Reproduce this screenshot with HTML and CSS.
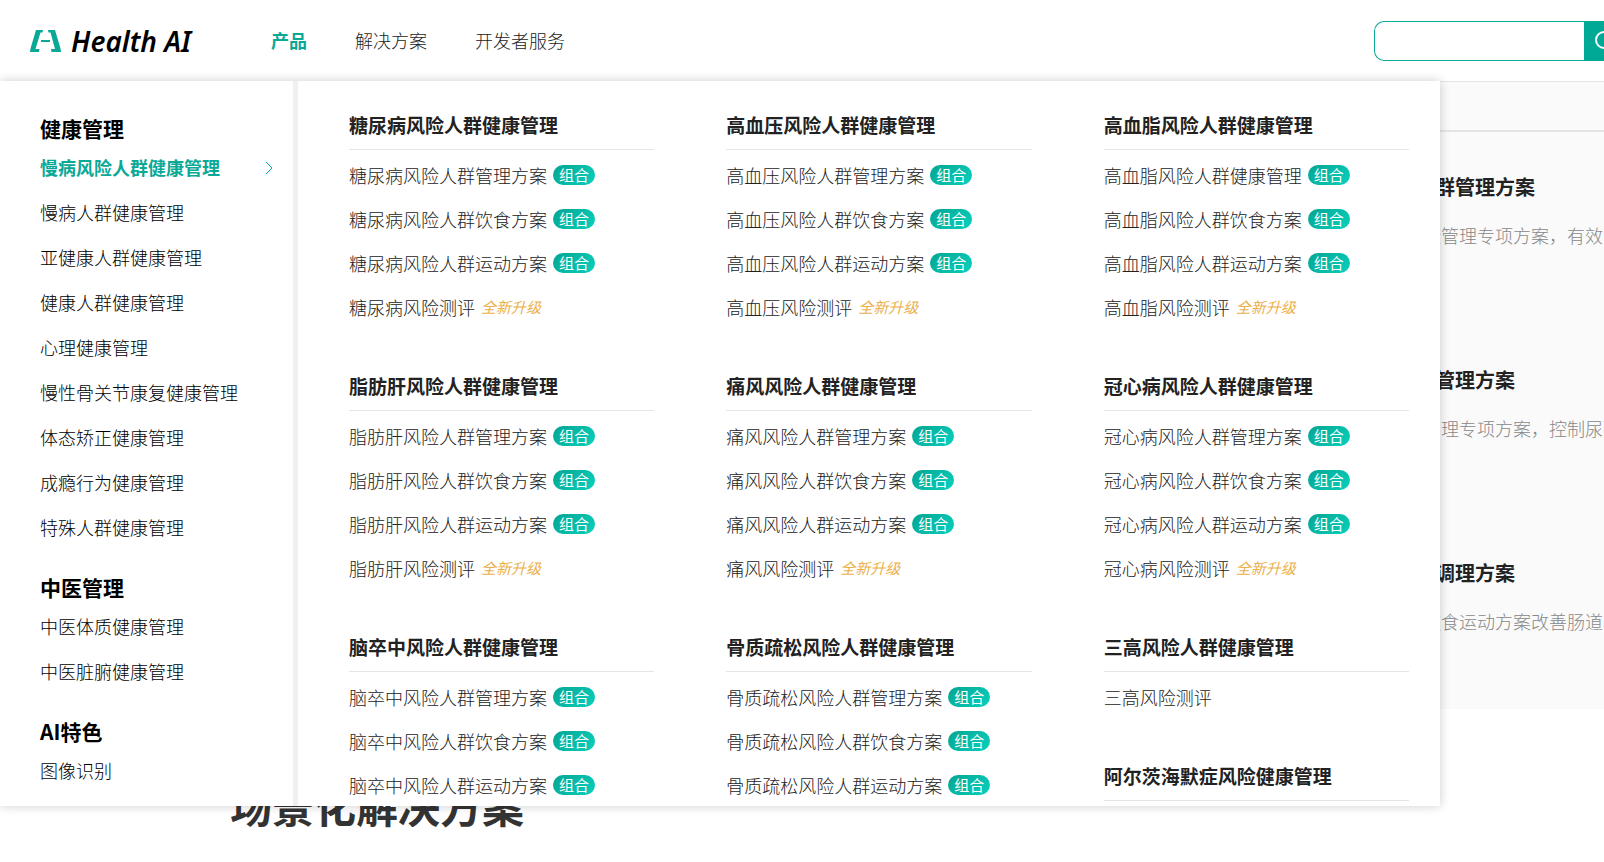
FILE: index.html
```html
<!DOCTYPE html>
<html lang="zh-CN">
<head>
    <meta charset="UTF-8">
    <title>Health AI</title>
    <link rel="stylesheet" href="styles.css">
</head>
<body>
    <header class="header">
        <a class="logo" href="#">
            <svg class="logo-mark" viewBox="0 0 31 22" fill="#0aa896">
                <path d="M6 0H13L12.500 2.500H10.500L5.500 19H9.500L9 22H0L0.500 18.500Z"/>
                <path d="M18 0H25L30.500 18.500L31 22H21.500L21 19H25L20.500 2.500H18.500Z"/>
                <rect x="11" y="10" width="9" height="2"/>
            </svg>
            <span class="logo-text">Health AI</span>
        </a>
        <nav class="nav">
            <a class="nav-link active" href="#">产品</a>
            <a class="nav-link" href="#">解决方案</a>
            <a class="nav-link" href="#">开发者服务</a>
        </nav>
        <form class="search">
            <input class="search-input" type="text" aria-label="搜索">
            <button class="search-btn" type="button" aria-label="搜索">
                <svg viewBox="0 0 20 20" fill="none" stroke="#fff" stroke-width="2">
                    <circle cx="9" cy="9" r="8"/>
                    <path d="M15 15L19 19"/>
                </svg>
            </button>
        </form>
    </header>

    <main class="page">
        <section class="plans">
            <div class="plan-tabs"></div>
            <div class="plan-list">
                <article class="plan">
                    <h3>高血压风险人群管理方案</h3>
                    <p>针对高血压健康管理专项方案，有效降低风险</p>
                </article>
                <article class="plan">
                    <h3>痛风风险人群管理方案</h3>
                    <p>针对痛风健康管理专项方案，控制尿酸水平</p>
                </article>
                <article class="plan">
                    <h3>肠道健康人群调理方案</h3>
                    <p>通过合理科学饮食运动方案改善肠道功能</p>
                </article>
            </div>
        </section>
        <h2 class="scene-title">场景化解决方案</h2>
    </main>

    <!-- 产品下拉菜单 -->
    <div class="menu">
        <aside class="side">
            <section class="side-group">
                <h3>健康管理</h3>
                <a class="active" href="#">慢病风险人群健康管理
                    <svg class="arrow" viewBox="0 0 8 14" fill="none" stroke="#0aa896"><path d="M1 1L7 7L1 13"/></svg>
                </a>
                <a href="#">慢病人群健康管理</a>
                <a href="#">亚健康人群健康管理</a>
                <a href="#">健康人群健康管理</a>
                <a href="#">心理健康管理</a>
                <a href="#">慢性骨关节康复健康管理</a>
                <a href="#">体态矫正健康管理</a>
                <a href="#">成瘾行为健康管理</a>
                <a href="#">特殊人群健康管理</a>
            </section>
            <section class="side-group">
                <h3>中医管理</h3>
                <a href="#">中医体质健康管理</a>
                <a href="#">中医脏腑健康管理</a>
            </section>
            <section class="side-group">
                <h3>AI特色</h3>
                <a href="#">图像识别</a>
            </section>
        </aside>

        <div class="content">
            <div class="column">
                <section class="group">
                    <h4>糖尿病风险人群健康管理</h4>
                    <a href="#">糖尿病风险人群管理方案<span class="tag">组合</span></a>
                    <a href="#">糖尿病风险人群饮食方案<span class="tag">组合</span></a>
                    <a href="#">糖尿病风险人群运动方案<span class="tag">组合</span></a>
                    <a href="#">糖尿病风险测评<em class="new">全新升级</em></a>
                </section>
                <section class="group">
                    <h4>脂肪肝风险人群健康管理</h4>
                    <a href="#">脂肪肝风险人群管理方案<span class="tag">组合</span></a>
                    <a href="#">脂肪肝风险人群饮食方案<span class="tag">组合</span></a>
                    <a href="#">脂肪肝风险人群运动方案<span class="tag">组合</span></a>
                    <a href="#">脂肪肝风险测评<em class="new">全新升级</em></a>
                </section>
                <section class="group">
                    <h4>脑卒中风险人群健康管理</h4>
                    <a href="#">脑卒中风险人群管理方案<span class="tag">组合</span></a>
                    <a href="#">脑卒中风险人群饮食方案<span class="tag">组合</span></a>
                    <a href="#">脑卒中风险人群运动方案<span class="tag">组合</span></a>
                </section>
            </div>
            <div class="column">
                <section class="group">
                    <h4>高血压风险人群健康管理</h4>
                    <a href="#">高血压风险人群管理方案<span class="tag">组合</span></a>
                    <a href="#">高血压风险人群饮食方案<span class="tag">组合</span></a>
                    <a href="#">高血压风险人群运动方案<span class="tag">组合</span></a>
                    <a href="#">高血压风险测评<em class="new">全新升级</em></a>
                </section>
                <section class="group">
                    <h4>痛风风险人群健康管理</h4>
                    <a href="#">痛风风险人群管理方案<span class="tag">组合</span></a>
                    <a href="#">痛风风险人群饮食方案<span class="tag">组合</span></a>
                    <a href="#">痛风风险人群运动方案<span class="tag">组合</span></a>
                    <a href="#">痛风风险测评<em class="new">全新升级</em></a>
                </section>
                <section class="group">
                    <h4>骨质疏松风险人群健康管理</h4>
                    <a href="#">骨质疏松风险人群管理方案<span class="tag">组合</span></a>
                    <a href="#">骨质疏松风险人群饮食方案<span class="tag">组合</span></a>
                    <a href="#">骨质疏松风险人群运动方案<span class="tag">组合</span></a>
                </section>
            </div>
            <div class="column">
                <section class="group">
                    <h4>高血脂风险人群健康管理</h4>
                    <a href="#">高血脂风险人群健康管理<span class="tag">组合</span></a>
                    <a href="#">高血脂风险人群饮食方案<span class="tag">组合</span></a>
                    <a href="#">高血脂风险人群运动方案<span class="tag">组合</span></a>
                    <a href="#">高血脂风险测评<em class="new">全新升级</em></a>
                </section>
                <section class="group">
                    <h4>冠心病风险人群健康管理</h4>
                    <a href="#">冠心病风险人群管理方案<span class="tag">组合</span></a>
                    <a href="#">冠心病风险人群饮食方案<span class="tag">组合</span></a>
                    <a href="#">冠心病风险人群运动方案<span class="tag">组合</span></a>
                    <a href="#">冠心病风险测评<em class="new">全新升级</em></a>
                </section>
                <section class="group">
                    <h4>三高风险人群健康管理</h4>
                    <a href="#">三高风险测评</a>
                </section>
                <section class="group">
                    <h4>阿尔茨海默症风险健康管理</h4>
                </section>
            </div>
        </div>
    </div>
</body>
</html>
```
FILE: styles.css
```css
:root {
    --primary-color: #0aa896;
    --border-color: #e5e5e5;
}

* {
    box-sizing: border-box;
}

body {
    margin: 0;
    height: 100vh;
    overflow: hidden;
    position: relative;
    background: #fff;
    color: #222;
    font-family: "Noto Sans CJK SC", sans-serif;
    font-size: 18px;
    font-weight: 300;
}

h2, h3, h4, p {
    margin: 0;
}

a {
    color: inherit;
    text-decoration: none;
}

.header {
    display: flex;
    align-items: center;
    height: 82px;
    padding-left: 30px;
    border-bottom: 1px solid var(--border-color);
}

.logo {
    display: flex;
    align-items: center;
    gap: 10px;
    width: 241px;
    color: #000;
}

.logo-mark {
    width: 31px;
    height: 22px;
}

.logo-text {
    font-family: "Noto Sans", sans-serif;
    font-size: 28px;
    font-style: italic;
    font-weight: 600;
    line-height: 40px;
}

.nav {
    display: flex;
    gap: 48px;
    padding-bottom: 2px;
}

.nav-link.active {
    color: var(--primary-color);
    font-weight: 700;
}

/* 搜索框右侧超出窗口 */
.search {
    display: flex;
    height: 40px;
    margin-left: auto;
    margin-right: -36px;
}

.search-input {
    width: 210px;
    padding: 0 12px;
    border: 1px solid var(--primary-color);
    border-right: none;
    border-radius: 10px 0 0 10px;
    outline: none;
    font: inherit;
}

.search-btn {
    display: flex;
    align-items: center;
    width: 56px;
    padding: 0 11px;
    border: none;
    border-radius: 0 10px 10px 0;
    background: #00a896;
}

.search-btn svg {
    width: 20px;
    height: 20px;
}

.plans {
    height: 627px;
    background: #fafafa;
}

.plan-tabs {
    height: 50px;
    border-bottom: 2px solid var(--border-color);
}

.plan-list {
    margin-left: calc(100% - 289px);
    padding-top: 40px;
    white-space: nowrap;
}

.plan {
    height: 193px;
}

.plan h3 {
    font-size: 20px;
    line-height: 30px;
    margin-bottom: 19px;
}

.plan p {
    color: #888;
    line-height: 28px;
}

.scene-title {
    padding: 66px 0 0 230px;
    color: #333;
    font-size: 42px;
    line-height: 60px;
}

.menu {
    position: absolute;
    top: 81px;
    left: 0;
    display: flex;
    width: calc(100% - 164px);
    height: calc(100vh - 137px);
    overflow: hidden;
    background: #fff;
    box-shadow: 0 0 10px rgba(0, 0, 0, 0.2);
}

.side {
    width: 298px;
    flex-shrink: 0;
    padding: 31px 20px 0 40px;
    border-right: 5px solid #f0f0f0;
    color: #000;
}

.side-group {
    margin-bottom: 21px;
}

.side-group h3 {
    font-size: 21px;
    line-height: 33px;
}

.side-group a {
    display: flex;
    align-items: center;
    justify-content: space-between;
    line-height: 45px;
}

.side-group a.active {
    color: var(--primary-color);
    font-weight: 700;
}

.arrow {
    width: 8px;
    height: 14px;
}

.content {
    flex: 1;
    display: grid;
    grid-template-columns: repeat(3, 1fr);
    gap: 72px;
    padding: 19px 31px 0 51px;
}

.group {
    margin-bottom: 32px;
}

.group h4 {
    margin-bottom: 3px;
    border-bottom: 1px solid var(--border-color);
    font-size: 19px;
    line-height: 49px;
}

.group a {
    display: flex;
    align-items: center;
    gap: 6px;
    line-height: 44px;
    white-space: nowrap;
}

.tag {
    width: 42px;
    border-radius: 10px;
    background: linear-gradient(135deg, #05a592, #08d0bd);
    color: #fff;
    font-size: 15px;
    font-weight: 400;
    line-height: 20px;
    text-align: center;
}

.new {
    color: #ecb04a;
    font-size: 15px;
    font-weight: 400;
}
```
